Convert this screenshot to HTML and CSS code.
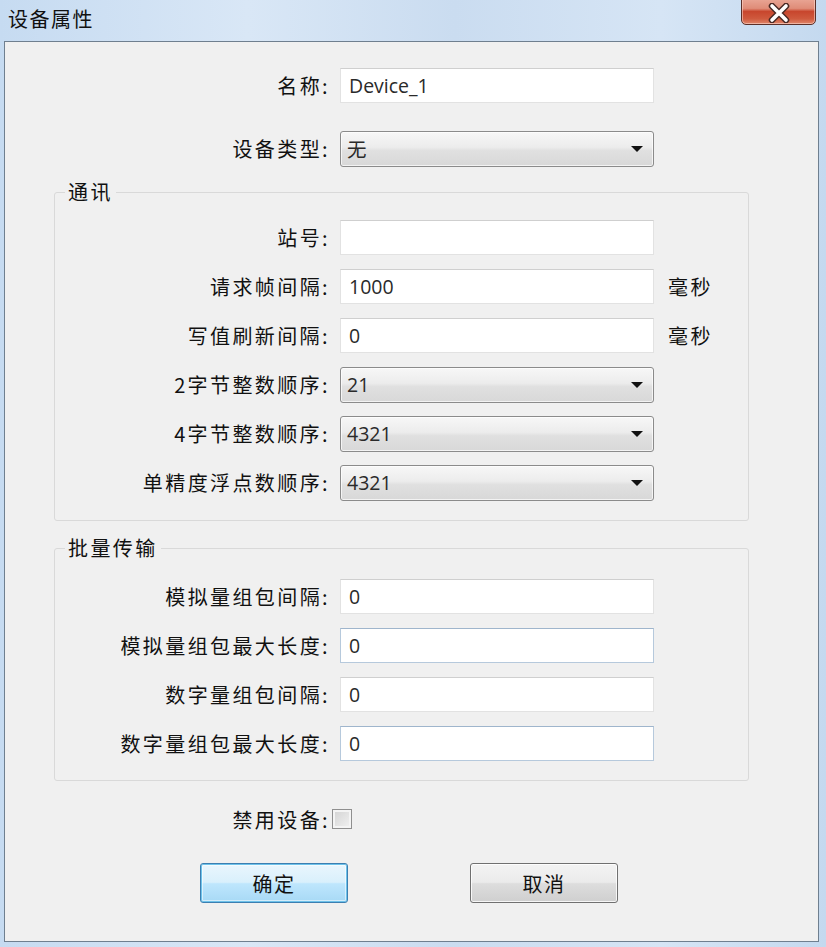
FILE: index.html
```html
<!DOCTYPE html>
<html lang="zh-CN">
<head>
  <meta charset="UTF-8">
  <title>设备属性</title>
  <link rel="stylesheet" href="styles.css">
</head>
<body>
  <div class="window">
    <div class="titlebar">
      <span class="title">设备属性</span>
      <span class="close">
        <svg width="26" height="20" viewBox="0 0 26 20">
          <path d="M6 3 L20 17 M20 3 L6 17" stroke="#4a2a25" stroke-width="6.5" stroke-linecap="round"/>
          <path d="M6 3 L20 17 M20 3 L6 17" stroke="#ffffff" stroke-width="3.6" stroke-linecap="round"/>
        </svg>
      </span>
    </div>

    <div class="client">
      <!-- 基本 -->
      <div class="row first">
        <label>名称:</label>
        <input class="edit" type="text" value="Device_1">
      </div>
      <div class="row second">
        <label>设备类型:</label>
        <div class="combo"><span>无</span><i class="arrow"></i></div>
      </div>

      <!-- 通讯 -->
      <fieldset class="group comm">
        <legend>通讯</legend>
        <div class="row">
          <label>站号:</label>
          <input class="edit" type="text" value="">
        </div>
        <div class="row">
          <label>请求帧间隔:</label>
          <input class="edit" type="text" value="1000">
          <span class="unit">毫秒</span>
        </div>
        <div class="row">
          <label>写值刷新间隔:</label>
          <input class="edit" type="text" value="0">
          <span class="unit">毫秒</span>
        </div>
        <div class="row">
          <label>2字节整数顺序:</label>
          <div class="combo"><span>21</span><i class="arrow"></i></div>
        </div>
        <div class="row">
          <label>4字节整数顺序:</label>
          <div class="combo"><span>4321</span><i class="arrow"></i></div>
        </div>
        <div class="row">
          <label>单精度浮点数顺序:</label>
          <div class="combo"><span>4321</span><i class="arrow"></i></div>
        </div>
      </fieldset>

      <!-- 批量传输 -->
      <fieldset class="group batch">
        <legend>批量传输</legend>
        <div class="row">
          <label>模拟量组包间隔:</label>
          <input class="edit" type="text" value="0">
        </div>
        <div class="row">
          <label>模拟量组包最大长度:</label>
          <input class="edit hot" type="text" value="0">
        </div>
        <div class="row">
          <label>数字量组包间隔:</label>
          <input class="edit" type="text" value="0">
        </div>
        <div class="row">
          <label>数字量组包最大长度:</label>
          <input class="edit hot" type="text" value="0">
        </div>
      </fieldset>

      <div class="row check">
        <label>禁用设备:</label>
        <span class="checkbox"></span>
      </div>

      <div class="buttons">
        <button class="btn default">确定</button>
        <button class="btn">取消</button>
      </div>
    </div>
  </div>
</body>
</html>
```

FILE: styles.css
```css
* { box-sizing: border-box; }
body { margin: 0; font-family: "Noto Sans CJK SC", sans-serif; color: #111; }

.window {
  height: 947px; display: flex; flex-direction: column;
  background: linear-gradient(90deg, #c6dbf1 0%, #d9e7f6 30%, #cadcf0 55%, #d6e5f5 80%, #c4d9ef 100%);
}
.titlebar { height: 41px; position: relative; }
.title { display: block; padding: 6px 0 0 8px; font-size: 20px; letter-spacing: 1.5px; line-height: 26px; color: #111; }
.close {
  position: absolute; left: 741px; top: -3px; width: 75px; height: 28px;
  border: 1px solid #5b2f28; border-radius: 0 0 5px 5px;
  background: linear-gradient(#eaa898 0%, #df8c78 40%, #c8462d 52%, #cf5a3e 80%, #e0866a 100%);
  box-shadow: inset 0 0 0 1px rgba(255, 220, 210, 0.55);
  display: flex; align-items: center; justify-content: center; padding-top: 3px;
}

.client {
  flex: 1; margin: 0 7px 5px 4px;
  background: #f0f0f0;
  border: 1px solid #6f7f8f;
  padding-top: 26px;
}

.row { display: flex; align-items: center; height: 35px; }
.row label {
  width: 335px; padding-right: 10px; text-align: right;
  font-size: 20px; letter-spacing: 2.4px; white-space: nowrap;
}
.row.second { margin-top: 28px; }

.edit {
  width: 314px; height: 35px; margin: 0; padding: 0 8px;
  background: #fff; border: 1px solid #e2e2e2; border-top-color: #cfcfcf;
  font-family: "Open Sans", "Noto Sans CJK SC", sans-serif; font-size: 19.5px; color: #2a2a2a;
  outline: none;
}
.edit.hot { border-color: #b6c9dc; border-top-color: #9fb5cc; }

.combo {
  width: 314px; height: 36px; display: flex; align-items: center; justify-content: space-between;
  padding: 0 10px 0 6px;
  border: 1px solid #8b8b8b; border-radius: 3px;
  background: linear-gradient(#f7f7f7 0%, #ececec 45%, #e0e0e0 55%, #d8d8d8 100%);
  box-shadow: inset 0 0 0 1px rgba(255, 255, 255, 0.7);
  font-family: "Open Sans", "Noto Sans CJK SC", sans-serif; font-size: 19.5px; color: #2a2a2a;
}
.arrow {
  width: 0; height: 0;
  border-left: 6px solid transparent; border-right: 6px solid transparent; border-top: 6px solid #111;
}
.unit { margin-left: 14px; font-size: 20px; letter-spacing: 2.4px; }

.group {
  margin: 0 0 0 49px; width: 695px; padding: 0;
  border: 1px solid #d9d9d9; border-radius: 3px;
  display: flex; flex-direction: column; gap: 14px;
}
.group legend {
  margin-left: 10px; padding: 0 3px; font-size: 20px; letter-spacing: 2.4px; line-height: 24px;
}
.group .row label { width: 285px; }
.comm { margin-top: 14px; padding: 16px 0 20px; }
.batch { margin-top: 15px; padding: 19px 0 19px; }

.row.check { height: 20px; margin-top: 28px; }
.row.check label { padding-right: 2px; width: 327px; }
.checkbox {
  width: 20px; height: 20px; border: 1px solid #8f8f8f;
  background: linear-gradient(135deg, #d2d2d2, #f2f2f2);
  box-shadow: inset 0 0 0 2px #f4f4f4;
}

.buttons { display: flex; gap: 122px; margin-top: 34px; padding-left: 195px; }
.btn {
  width: 148px; height: 40px; border-radius: 3px;
  border: 1px solid #707070;
  background: linear-gradient(#f3f3f3 0%, #ebebeb 48%, #dddddd 52%, #cfcfcf 100%);
  box-shadow: inset 0 0 0 1px rgba(255, 255, 255, 0.8);
  font-family: "Noto Sans CJK SC", sans-serif; font-size: 20px; letter-spacing: 1.5px; color: #111;
}
.btn.default {
  border-color: #3c7fb1;
  background: linear-gradient(#eaf6fd 0%, #d9f0fc 48%, #bee6fd 52%, #a7d9f5 100%);
  box-shadow: inset 0 0 0 1px #6ec2ea, inset 0 0 0 2px rgba(255, 255, 255, 0.5);
}
```
